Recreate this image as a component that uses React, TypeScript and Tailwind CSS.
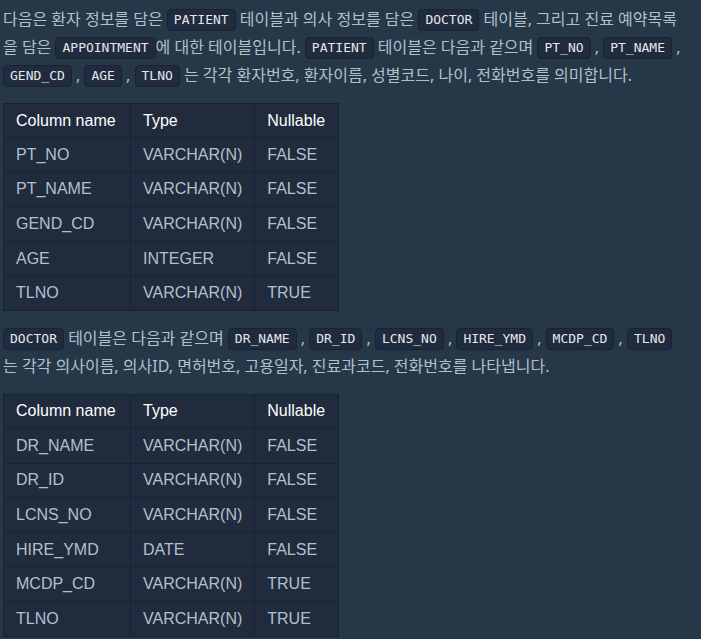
import React from 'react';

const patientRows = [
  ['PT_NO', 'VARCHAR(N)', 'FALSE'],
  ['PT_NAME', 'VARCHAR(N)', 'FALSE'],
  ['GEND_CD', 'VARCHAR(N)', 'FALSE'],
  ['AGE', 'INTEGER', 'FALSE'],
  ['TLNO', 'VARCHAR(N)', 'TRUE'],
];

const doctorRows = [
  ['DR_NAME', 'VARCHAR(N)', 'FALSE'],
  ['DR_ID', 'VARCHAR(N)', 'FALSE'],
  ['LCNS_NO', 'VARCHAR(N)', 'FALSE'],
  ['HIRE_YMD', 'DATE', 'FALSE'],
  ['MCDP_CD', 'VARCHAR(N)', 'TRUE'],
  ['TLNO', 'VARCHAR(N)', 'TRUE'],
];

function Code({ children }: { children: React.ReactNode }) {
  return (
    <code className="inline-block rounded-[4px] border border-[#172334] bg-[#202b3d] px-[6px] align-[1px] leading-[20px] text-[13px] text-[#e2e8ee] [font-family:'DejaVu_Sans_Mono',monospace]">
      {children}
    </code>
  );
}

function SchemaTable({ rows }: { rows: string[][] }) {
  return (
    <table className="border-collapse bg-[#202b3d] text-[16px] [font-family:'Liberation_Sans',Arial,sans-serif]">
      <thead>
        <tr className="h-[34px]">
          <th className="w-[127px] border border-[#172334] px-3 text-left font-normal text-white">Column name</th>
          <th className="w-[122px] border border-[#172334] px-3 text-left font-normal text-white">Type</th>
          <th className="w-[84px] border border-[#172334] px-3 text-left font-normal text-white">Nullable</th>
        </tr>
      </thead>
      <tbody>
        {rows.map((r) => (
          <tr key={r[0]} className="h-[34.6px]">
            {r.map((c, i) => (
              <td key={i} className="border border-[#172334] px-3 text-[#b2c0cc]">
                {c}
              </td>
            ))}
          </tr>
        ))}
      </tbody>
    </table>
  );
}

export default function App() {
  return (
    <div className="min-h-[639px] bg-[#263747] px-[3px] pt-[5px] text-[16px] leading-[28px] text-[#b2c0cc] [font-family:'Noto_Sans','Noto_Sans_CJK_KR',sans-serif]">
      <p className="pr-[8px]">
        다음은 환자 정보를 담은 <Code>PATIENT</Code> 테이블과 의사 정보를 담은 <Code>DOCTOR</Code> 테이블, 그리고 진료 예약목록을 담은 <Code>APPOINTMENT</Code>에 대한 테이블입니다. <Code>PATIENT</Code> 테이블은 다음과 같으며 <Code>PT_NO</Code> , <Code>PT_NAME</Code> , <Code>GEND_CD</Code> , <Code>AGE</Code> , <Code>TLNO</Code> 는 각각 환자번호, 환자이름, 성별코드, 나이, 전화번호를 의미합니다.
      </p>
      <div className="mt-[14px]">
        <SchemaTable rows={patientRows} />
      </div>
      <p className="mt-[13px] pr-[8px]">
        <Code>DOCTOR</Code> 테이블은 다음과 같으며 <Code>DR_NAME</Code> , <Code>DR_ID</Code> , <Code>LCNS_NO</Code> , <Code>HIRE_YMD</Code> , <Code>MCDP_CD</Code> , <Code>TLNO</Code> 는 각각 의사이름, 의사ID, 면허번호, 고용일자, 진료과코드, 전화번호를 나타냅니다.
      </p>
      <div className="mt-[14px]">
        <SchemaTable rows={doctorRows} />
      </div>
    </div>
  );
}
